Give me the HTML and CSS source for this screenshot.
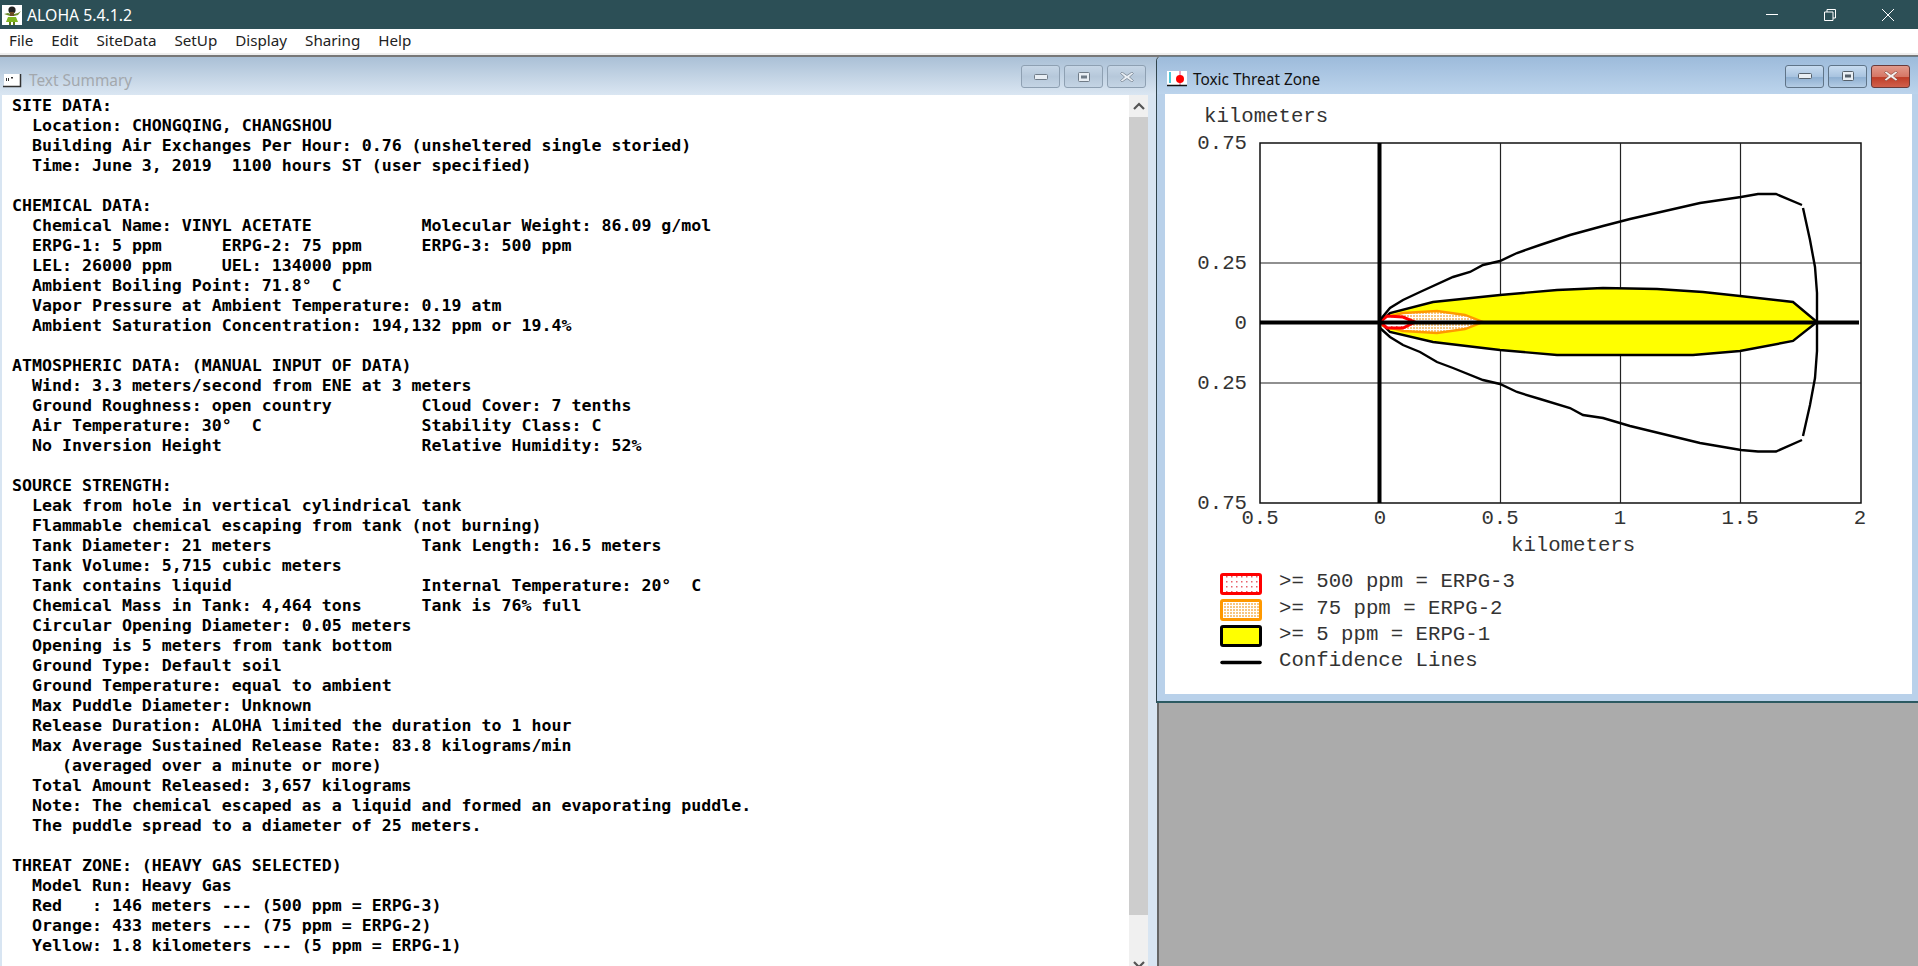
FILE: index.html
```html
<!DOCTYPE html>
<html lang="en">
<head>
<meta charset="utf-8">
<title>ALOHA 5.4.1.2</title>
<link rel="stylesheet" href="styles.css">
</head>
<body>
<header class="app-title">
  <svg class="app-icon" viewBox="0 0 20 20">
    <rect width="20" height="20" fill="#fff"/>
    <path d="M2 9 6 8l3 1h3l4-1 3-2-3 4-4 1H8L5 10z" fill="#6b8a2a"/>
    <circle cx="10" cy="5" r="3.6" fill="#222"/>
    <rect x="8" y="7" width="4" height="4" fill="#6b4a22"/>
    <path d="M6 12h8l2 5H4z" fill="#7fb51f"/>
    <path d="M7 17h2v3H7zM11 17h2v3h-2z" fill="#5b7a1a"/>
  </svg>
  <span class="app-name">ALOHA 5.4.1.2</span>
  <div class="sys-btns">
    <svg class="sys" viewBox="0 0 12 12"><path d="M0 5.5h12" stroke="#fff" fill="none"/></svg>
    <svg class="sys" viewBox="0 0 12 12"><path d="M.5 3h8.500v8.500H.5zM3 3V.5h8.500V9H9" stroke="#fff" fill="none"/></svg>
    <svg class="sys" viewBox="0 0 12 12"><path d="M0 0l12 12M12 0 0 12" stroke="#fff" fill="none"/></svg>
  </div>
</header>
<nav class="menubar">
  <span class="menu-item">File</span>
  <span class="menu-item">Edit</span>
  <span class="menu-item">SiteData</span>
  <span class="menu-item">SetUp</span>
  <span class="menu-item">Display</span>
  <span class="menu-item">Sharing</span>
  <span class="menu-item">Help</span>
</nav>
<main class="mdi">
  <section class="win win-text">
    <div class="win-title">
      <svg class="win-icon" viewBox="0 0 20 16">
        <path d="M1 1h16v12H1z" fill="#fff"/>
        <path d="M17.500 1v12.500H0" stroke="#333" stroke-width="1.500" fill="none"/>
        <path d="M3 5h1v3H3zM5 5h1v3H5zM8 4h2v1.500H8z" fill="#333"/>
      </svg>
      <span class="win-name">Text Summary</span>
      <div class="win-btns">
        <div class="win-btn"><svg class="glyph" viewBox="0 0 14 10"><rect x=".5" y="2.500" width="13" height="5" rx="1" fill="#e8eef4" stroke="#6f7b87"/></svg></div>
        <div class="win-btn"><svg class="glyph" viewBox="0 0 14 10"><rect x="1.500" y=".5" width="11" height="9" rx="1" fill="#e8eef4" stroke="#6f7b87"/><rect x="4" y="3.500" width="6" height="3" fill="#6f7b87"/></svg></div>
        <div class="win-btn"><svg class="glyph" viewBox="0 0 14 10"><path d="M2 0l5 3.500L12 0l1.500 1.500L9.500 5l4 3.500L12 10 7 6.500 2 10 .5 8.500l4-3.500-4-3.500z" fill="#e8eef4" stroke="#7a8794" stroke-width=".8"/></svg></div>
      </div>
    </div>
    <div class="win-body">
<pre class="summary">SITE DATA:
  Location: CHONGQING, CHANGSHOU
  Building Air Exchanges Per Hour: 0.76 (unsheltered single storied)
  Time: June 3, 2019  1100 hours ST (user specified)

CHEMICAL DATA:
  Chemical Name: VINYL ACETATE           Molecular Weight: 86.09 g/mol
  ERPG-1: 5 ppm      ERPG-2: 75 ppm      ERPG-3: 500 ppm
  LEL: 26000 ppm     UEL: 134000 ppm
  Ambient Boiling Point: 71.8°  C
  Vapor Pressure at Ambient Temperature: 0.19 atm
  Ambient Saturation Concentration: 194,132 ppm or 19.4%

ATMOSPHERIC DATA: (MANUAL INPUT OF DATA)
  Wind: 3.3 meters/second from ENE at 3 meters
  Ground Roughness: open country         Cloud Cover: 7 tenths
  Air Temperature: 30°  C                Stability Class: C
  No Inversion Height                    Relative Humidity: 52%

SOURCE STRENGTH:
  Leak from hole in vertical cylindrical tank
  Flammable chemical escaping from tank (not burning)
  Tank Diameter: 21 meters               Tank Length: 16.5 meters
  Tank Volume: 5,715 cubic meters
  Tank contains liquid                   Internal Temperature: 20°  C
  Chemical Mass in Tank: 4,464 tons      Tank is 76% full
  Circular Opening Diameter: 0.05 meters
  Opening is 5 meters from tank bottom
  Ground Type: Default soil
  Ground Temperature: equal to ambient
  Max Puddle Diameter: Unknown
  Release Duration: ALOHA limited the duration to 1 hour
  Max Average Sustained Release Rate: 83.8 kilograms/min
     (averaged over a minute or more)
  Total Amount Released: 3,657 kilograms
  Note: The chemical escaped as a liquid and formed an evaporating puddle.
  The puddle spread to a diameter of 25 meters.

THREAT ZONE: (HEAVY GAS SELECTED)
  Model Run: Heavy Gas
  Red   : 146 meters --- (500 ppm = ERPG-3)
  Orange: 433 meters --- (75 ppm = ERPG-2)
  Yellow: 1.8 kilometers --- (5 ppm = ERPG-1)</pre>
      <div class="scrollbar">
        <div class="scroll-btn"><svg class="chev" viewBox="0 0 12 8"><path d="M1 7l5-5 5 5" fill="none" stroke="#555" stroke-width="2.200"/></svg></div>
        <div class="scroll-thumb"></div>
        <div class="scroll-rest"><svg class="chev" viewBox="0 0 12 8"><path d="M1 1l5 5 5-5" fill="none" stroke="#555" stroke-width="2.200"/></svg></div>
      </div>
    </div>
  </section>
  <div class="mdi-right">
    <section class="win win-plot">
      <div class="win-title">
        <svg class="win-icon" viewBox="0 0 20 16">
          <rect width="20" height="14" fill="#fff"/>
          <path d="M3 1v11" stroke="#4cc8d8" stroke-width="2"/>
          <path d="M13 0v14" stroke="#d8467a" stroke-width="1"/>
          <circle cx="13" cy="8" r="4" fill="#f00"/>
          <path d="M0 14.500h20" stroke="#111" stroke-width="1.500"/>
        </svg>
        <span class="win-name">Toxic Threat Zone</span>
        <div class="win-btns">
          <div class="win-btn"><svg class="glyph" viewBox="0 0 14 10"><rect x=".5" y="2.500" width="13" height="5" rx="1" fill="#e8eef4" stroke="#55606b"/></svg></div>
          <div class="win-btn"><svg class="glyph" viewBox="0 0 14 10"><rect x="1.500" y=".5" width="11" height="9" rx="1" fill="#e8eef4" stroke="#55606b"/><rect x="4" y="3.500" width="6" height="3" fill="#55606b"/></svg></div>
          <div class="win-btn win-close"><svg class="glyph" viewBox="0 0 14 10"><path d="M2 0l5 3.500L12 0l1.500 1.500L9.500 5l4 3.500L12 10 7 6.500 2 10 .5 8.500l4-3.500-4-3.500z" fill="#f4f0ee" stroke="#7e3a30" stroke-width=".6"/></svg></div>
        </div>
      </div>
      <div class="plot-client">
        <svg class="plot" viewBox="1165 94 747 600">
          <defs>
            <pattern id="dots-red" width="5" height="5" patternUnits="userSpaceOnUse">
              <rect width="5" height="5" fill="#fff"/><rect x="1" y="1" width="1.500" height="1.500" fill="#e8606a"/>
            </pattern>
            <pattern id="dots-orange" width="3" height="3" patternUnits="userSpaceOnUse">
              <rect width="3" height="3" fill="#fff"/><rect x="0" y="0" width="2" height="2" fill="#f7c680"/>
            </pattern>
          </defs>

          <text class="label" x="1204" y="122">kilometers</text>

          <path class="frame-line" d="M1260 143H1861V503H1260Z"/>
          <path class="grid-line" d="M1500.500 143V503M1620.500 143V503M1740.500 143V503M1260 263H1861M1260 383H1861"/>

          <path class="zone-yellow" d="M1380 322 1390 313 1433 302 1500 295 1557 290 1603 288 1657 289 1703 292 1740 296 1793 302 1817 322 1793 341 1740 351 1693 355 1557 355 1500 350 1433 342 1390 332Z"/>
          <path class="zone-orange" d="M1380 322 1383 318 1403 313 1437 311 1465 315 1483 322 1465 329 1437 333 1403 331 1383 326Z"/>
          <path class="zone-red" d="M1380 322 1387 316 1403 317 1415 322 1403 328 1387 328Z"/>

          <path class="conf" d="M1380 320 1390 308 1403 300 1420 292 1453 277 1470 272 1483 265 1500 261 1517 253 1540 245 1570 235 1603 226 1630 219 1700 203 1741 197 1758 194 1776 194 1802 205"/>
          <path class="conf" d="M1380 328 1390 337 1403 345 1420 352 1437 362 1453 368 1483 380 1500 384 1517 392 1540 399 1570 408 1583 415 1603 418 1630 426 1700 443 1741 450 1758 451.500 1776 451.500 1802 440"/>
          <path class="conf" d="M1803 208 1810 240 1815 267 1817 293 1817 351 1815 378 1810 405 1803 436"/>

          <path class="axis" d="M1379.500 143V503M1260 322.500H1859"/>

          <text class="label tick-y" x="1247" y="149">0.75</text>
          <text class="label tick-y" x="1247" y="269">0.25</text>
          <text class="label tick-y" x="1247" y="329">0</text>
          <text class="label tick-y" x="1247" y="389">0.25</text>
          <text class="label tick-y" x="1247" y="509">0.75</text>
          <text class="label tick-x" x="1260" y="524">0.5</text>
          <text class="label tick-x" x="1380" y="524">0</text>
          <text class="label tick-x" x="1500" y="524">0.5</text>
          <text class="label tick-x" x="1620" y="524">1</text>
          <text class="label tick-x" x="1740" y="524">1.5</text>
          <text class="label tick-x" x="1860" y="524">2</text>
          <text class="label" x="1511" y="551">kilometers</text>

          <rect class="swatch-red" x="1221.500" y="574.500" width="39" height="19" rx="1.500"/>
          <rect class="swatch-orange" x="1221.500" y="600.500" width="39" height="19" rx="1.500"/>
          <rect class="swatch-yellow" x="1221.500" y="626.500" width="39" height="19" rx="1.500"/>
          <path class="swatch-line" d="M1222 662.500H1260"/>
          <text class="label" x="1279" y="587">&gt;= 500 ppm = ERPG-3</text>
          <text class="label" x="1279" y="614">&gt;= 75 ppm = ERPG-2</text>
          <text class="label" x="1279" y="640">&gt;= 5 ppm = ERPG-1</text>
          <text class="label" x="1279" y="666">Confidence Lines</text>
        </svg>
      </div>
    </section>
    <div class="mdi-empty"></div>
  </div>
</main>
</body>
</html>
```
FILE: styles.css
```css
* { box-sizing: border-box; }
html, body { margin: 0; height: 100%; overflow: hidden; }
body {
  display: flex;
  flex-direction: column;
  font-family: "Noto Sans", sans-serif;
  background: #ababab;
}

.app-title {
  flex: none;
  height: 29px;
  background: #2c4f56;
  color: #fff;
  display: flex;
  align-items: center;
  padding-left: 2px;
}
.app-icon { width: 20px; height: 20px; flex: none; }
.app-name { margin-left: 5px; font-size: 15.8px; }
.sys-btns {
  margin-left: auto;
  display: flex;
  gap: 46px;
  padding-right: 24px;
}
.sys { width: 12px; height: 12px; display: block; }

.menubar {
  flex: none;
  height: 28px;
  background: #fff;
  display: flex;
  align-items: center;
  padding: 0 0 5px 0;
  border-bottom: 2px solid #777;
  box-shadow: inset 0 -2px 0 #eee;
  font-size: 15.2px;
  color: #222;
}
.menu-item { padding: 0 9px; }

.mdi { flex: 1; min-height: 0; display: flex; }

.win { display: flex; flex-direction: column; }
.win-title {
  flex: none;
  height: 38px;
  display: flex;
  align-items: center;
  padding-top: 9px;
}
.win-icon { width: 20px; height: 16px; flex: none; }
.win-name { font-size: 15.4px; margin-left: 6px; }
.win-btns { margin-left: auto; display: flex; gap: 4px; padding-bottom: 8px; }
.win-btn {
  width: 39px;
  height: 23px;
  border-radius: 3px;
  display: flex;
  align-items: center;
  justify-content: center;
}
.glyph { width: 14px; height: 10px; display: block; }

.win-text {
  flex: none;
  width: 1157px;
  background: #d8e5f2;
}
.win-text .win-title {
  background: linear-gradient(#aac0d6, #dae6f2);
  padding-left: 3px;
  padding-right: 11px;
}
.win-text .win-name { color: #a3a8ad; }
.win-text .win-btn {
  border: 1px solid #8ea0b2;
  background: linear-gradient(#c6d6e6, #b6c8da 50%, #c4d4e4);
}
.win-body {
  flex: 1;
  min-height: 0;
  display: flex;
  padding: 0 9px 0 2px;
}
.summary {
  flex: 1;
  min-width: 0;
  margin: 0;
  padding: 1px 0 0 10px;
  background: #fff;
  color: #000;
  overflow: hidden;
  font-family: "DejaVu Sans Mono", monospace;
  font-weight: 700;
  font-size: 16.6px;
  line-height: 20px;
}
.scrollbar {
  flex: none;
  width: 19px;
  background: #f0f0f0;
  display: flex;
  flex-direction: column;
}
.scroll-btn {
  flex: none;
  height: 22px;
  display: flex;
  align-items: center;
  justify-content: center;
}
.scroll-thumb { flex: none; height: 798px; background: #cdcdcd; }
.scroll-rest {
  flex: 1;
  display: flex;
  align-items: flex-end;
  justify-content: center;
  overflow: hidden;
}
.chev { width: 12px; height: 8px; display: block; margin-bottom: -3px; }
.scroll-btn .chev { margin-bottom: 0; }

.mdi-right {
  flex: 1;
  min-width: 0;
  margin-left: -1px;
  margin-top: -1px;
  display: flex;
  flex-direction: column;
  position: relative;
}
.win-plot {
  flex: none;
  height: 647px;
  background: #b9d1ea;
  border-left: 1px solid #30444c;
  border-top: 1px solid #6a7c88;
  border-bottom: 2px solid #2c5a62;
  border-top-left-radius: 5px;
}
.win-plot .win-title {
  background: linear-gradient(#9dbbdb, #bcd4ec);
  border-top-left-radius: 5px;
  height: 37px;
  padding-top: 7px;
  padding-left: 10px;
  padding-right: 8px;
}
.win-plot .win-name { color: #111; }
.win-plot .win-btns { padding-bottom: 6px; }
.win-plot .win-btn {
  border: 1px solid #5f7488;
  background: linear-gradient(#c8dcf0, #a9c4e0 50%, #8fb0d2 55%, #b4cce4);
}
.win-plot .win-close {
  border-color: #6a3a3a;
  background: linear-gradient(#e29a8c, #d67766 50%, #bf3d28 55%, #d0604c);
}
.plot-client {
  height: 600px;
  margin: 0 6px 0 8px;
  background: #fff;
}
.plot { display: block; width: 747px; height: 600px; }
.mdi-empty {
  flex: 1;
  margin-left: 1px;
  background: #ababab;
  border-left: 2px solid #666;
}

.label {
  font-family: "Liberation Mono", monospace;
  font-size: 20.7px;
  fill: #333;
}
.tick-y { text-anchor: end; }
.tick-x { text-anchor: middle; }

.frame-line { fill: none; stroke: #111; stroke-width: 1.5; }
.grid-line { fill: none; stroke: #222; stroke-width: 1.2; }
.axis { fill: none; stroke: #000; stroke-width: 4; }
.conf { fill: none; stroke: #000; stroke-width: 2.4; }
.zone-yellow { fill: #ff0; stroke: #000; stroke-width: 2.4; }
.zone-orange { fill: url(#dots-orange); stroke: #ff9900; stroke-width: 2.4; }
.zone-red { fill: url(#dots-red); stroke: #f00; stroke-width: 3; }
.swatch-red { fill: url(#dots-red); stroke: #f00; stroke-width: 3; }
.swatch-orange { fill: url(#dots-orange); stroke: #ff9900; stroke-width: 3; }
.swatch-yellow { fill: #ff0; stroke: #000; stroke-width: 3; }
.swatch-line { fill: none; stroke: #000; stroke-width: 3.5; stroke-linecap: round; }
```
